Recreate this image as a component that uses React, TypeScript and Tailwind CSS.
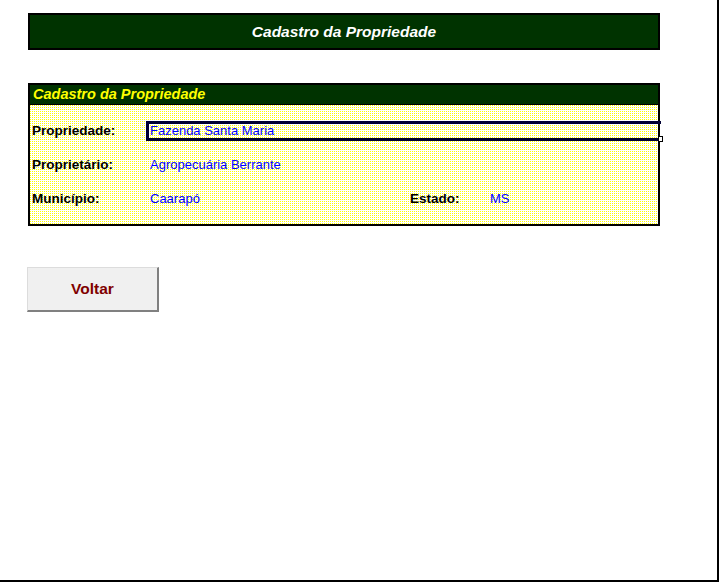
export default function App() {
  const dotted =
    "bg-[#ffff00] bg-[image:linear-gradient(90deg,transparent_1px,#fff_1px),linear-gradient(transparent_1px,#fff_1px)] bg-[size:2px_2px]";
  return (
    <div className="relative h-[582px] w-[719px] overflow-hidden border-r-2 border-b-2 border-black bg-white font-['Liberation_Sans',Arial,sans-serif]">
      <div className="pt-[13px] pl-[28px]">
        <div className="flex h-[37px] w-[632px] items-center justify-center border-2 border-black bg-[#003300] text-[15.5px] font-bold italic text-white">
          Cadastro da Propriedade
        </div>

        <div className="mt-[33px] w-[632px] border-2 border-black">
          <div className="flex h-[20px] items-center border-b border-black bg-[#003300] pl-[3px] text-[14.5px] font-bold italic text-[#ffff00]">
            Cadastro da Propriedade
          </div>
          <div className={`${dotted} pt-[9px] pb-[8px]`}>
            <div className="flex h-[34px] items-center">
              <span className="w-[116px] pl-[2px] text-[13.5px] font-bold text-black">
                Propriedade:
              </span>
              <div className="relative -mr-[3px] flex h-[20px] flex-1 items-center border-[3px] border-r-0 border-[#000033] pl-[1px] text-[13px] text-[#0000ff]">
                Fazenda Santa Maria
                <span className="absolute -right-[2px] -bottom-[4px] h-[6px] w-[5px] border border-black bg-white" />
              </div>
            </div>
            <div className="flex h-[34px] items-center">
              <span className="w-[120px] pl-[2px] text-[13.5px] font-bold text-black">
                Proprietário:
              </span>
              <span className="text-[13px] text-[#0000ff]">Agropecuária Berrante</span>
            </div>
            <div className="flex h-[34px] items-center">
              <span className="w-[120px] pl-[2px] text-[13.5px] font-bold text-black">
                Município:
              </span>
              <span className="w-[260px] text-[13px] text-[#0000ff]">Caarapó</span>
              <span className="w-[80px] text-[13.5px] font-bold text-black">Estado:</span>
              <span className="text-[13px] text-[#0000ff]">MS</span>
            </div>
          </div>
        </div>

        <button className="-ml-[1px] mt-[41px] flex h-[45px] w-[132px] items-center justify-center border-t border-l border-[#dcdcdc] border-r-2 border-b-2 border-r-[#808080] border-b-[#808080] bg-[#f0f0f0] text-[15.5px] font-bold text-[#800000]">
          Voltar
        </button>
      </div>
    </div>
  );
}
